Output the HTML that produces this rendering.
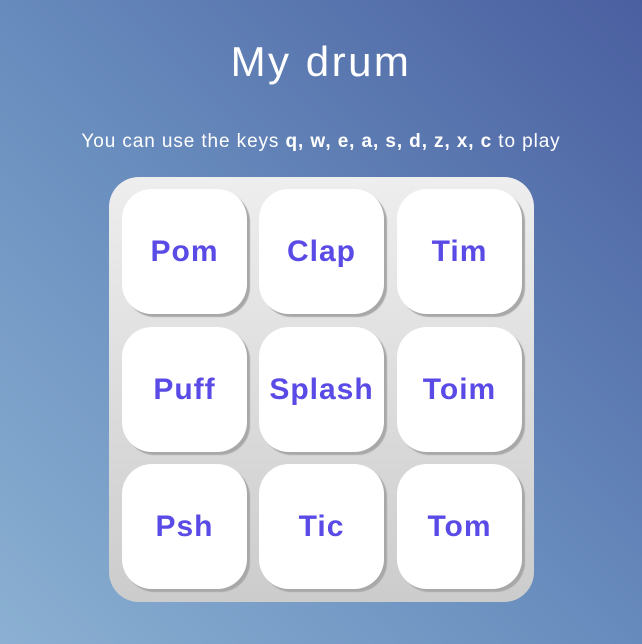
<!DOCTYPE html>
<html><head><style>
html,body{margin:0;padding:0;width:642px;height:644px;overflow:hidden}
body{background:linear-gradient(to top right,#8bb0d2 0%,#6a8fbf 45%,#4a5fa0 100%);font-family:"Liberation Sans",sans-serif;color:#fff;position:relative}
h1{position:absolute;top:38px;left:0;width:642px;text-align:center;margin:0;font-weight:normal;font-size:42px;letter-spacing:2.5px}
p{position:absolute;top:131px;left:0;width:642px;text-align:center;margin:0;font-size:19px;letter-spacing:0.9px}
.panel{position:absolute;left:109px;top:177px;width:425px;height:425px;border-radius:30px;background:linear-gradient(#eeeeee,#cccccc)}
.b{position:absolute;width:125px;height:125px;border-radius:30px;background:#fff;box-shadow:3px 3px 1px #a8a8a8;display:flex;align-items:center;justify-content:center;color:#5a4ae6;font-size:30px;font-weight:bold;letter-spacing:1px}
</style></head><body>
<h1>My drum</h1>
<p>You can use the keys <b>q, w, e, a, s, d, z, x, c</b> to play</p>
<div class="panel">
<div class="b" style="left:13px;top:12px">Pom</div>
<div class="b" style="left:150px;top:12px">Clap</div>
<div class="b" style="left:288px;top:12px">Tim</div>
<div class="b" style="left:13px;top:150px">Puff</div>
<div class="b" style="left:150px;top:150px">Splash</div>
<div class="b" style="left:288px;top:150px">Toim</div>
<div class="b" style="left:13px;top:287px">Psh</div>
<div class="b" style="left:150px;top:287px">Tic</div>
<div class="b" style="left:288px;top:287px">Tom</div>
</div>
</body></html>
